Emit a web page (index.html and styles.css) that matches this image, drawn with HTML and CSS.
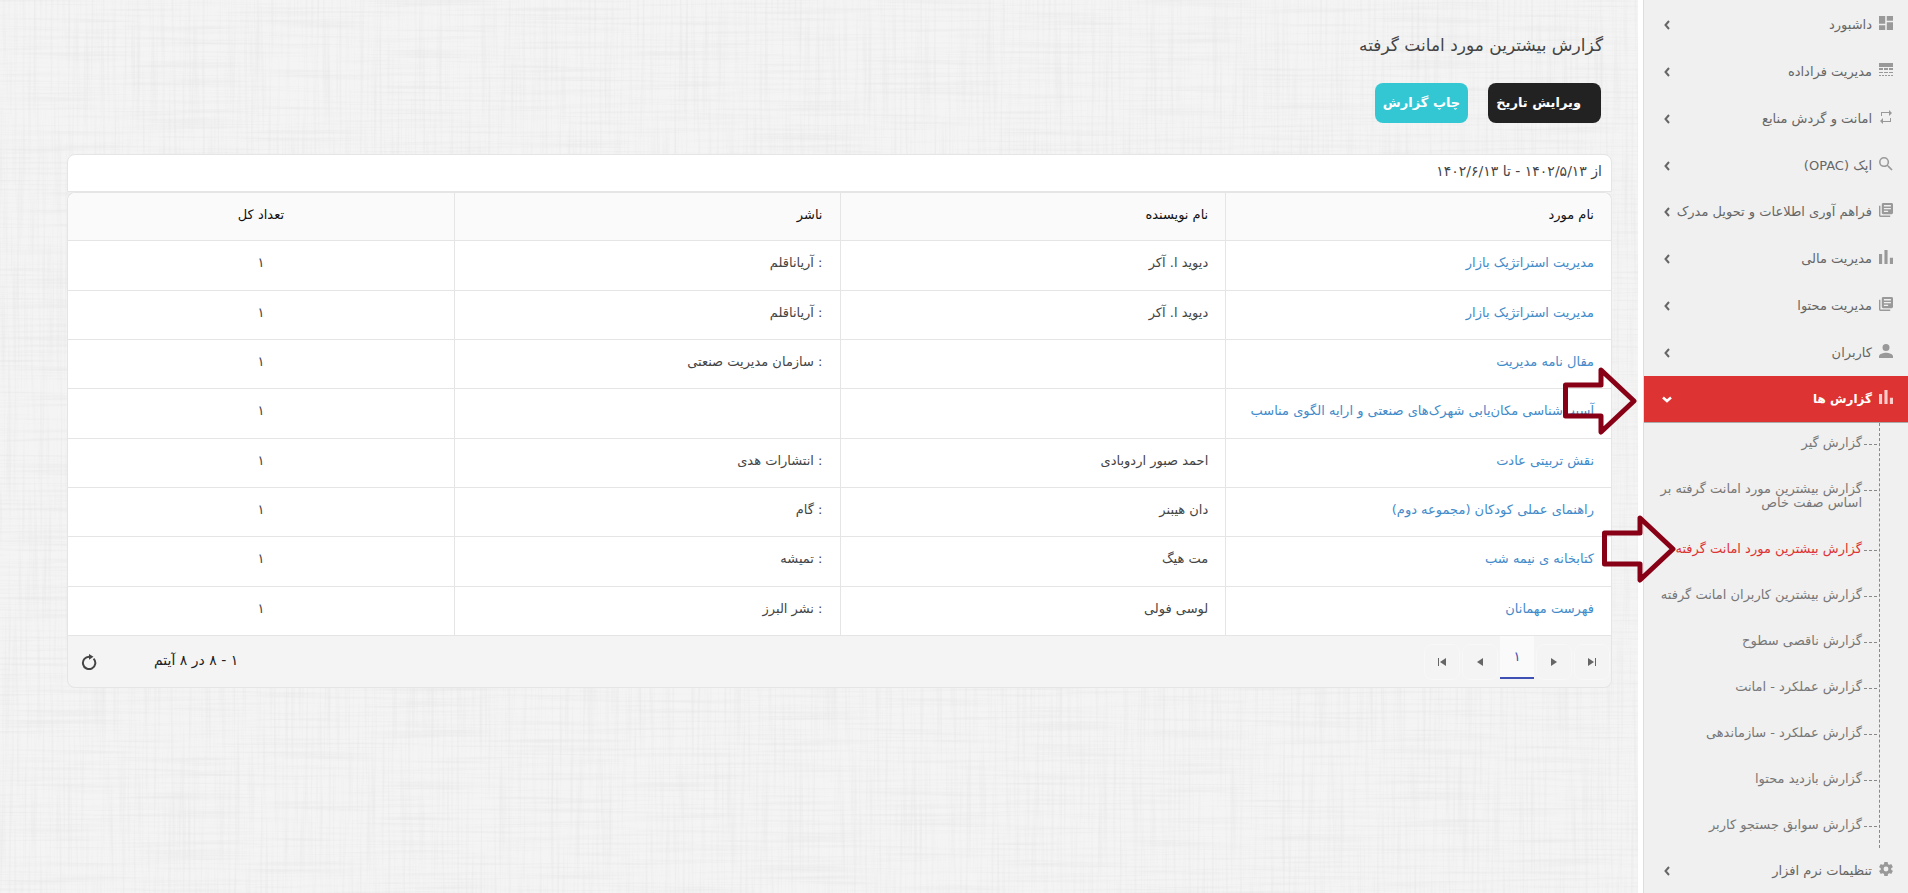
FILE: index.html
```html
<!DOCTYPE html>
<html lang="fa" dir="rtl">
<head>
  <meta charset="UTF-8" />
  <meta name="viewport" content="width=device-width, initial-scale=1.0"/>
  <title>گزارش بیشترین مورد امانت گرفته</title>
  <link rel="stylesheet" href="styles.css">
</head>
<body>

  <!-- Icons -->
  <svg class="icon-defs" aria-hidden="true">
    <symbol id="i-dashboard" viewBox="3 3 18 18"><path d="M3 13h8V3H3v10zm0 8h8v-6H3v6zm10 0h8V11h-8v10zm0-18v6h8V3h-8z"/></symbol>
    <symbol id="i-lines" viewBox="0 0 14 14"><path d="M0 0h14v4H0zM0 5h4v2H0zM5 5h4v2H5zM10 5h4v2h-4zM0 9h4v1H0zM5 9h4v1H5zM10 9h4v1h-4zM0 12h2v1H0zM3 12h2v1H3zM6 12h2v1H6zM9 12h2v1H9zM12 12h2v1h-2z"/></symbol>
    <symbol id="i-repeat" viewBox="0 0 14 14"><path d="M2 2h8V0l3 3-3 3V3H3v3H2zM12 12H4v2l-3-3 3-3v3h7V8h1z"/></symbol>
    <symbol id="i-search" viewBox="3 3 18 18"><path d="M15.500 14h-.79l-.28-.27C15.410 12.590 16 11.110 16 9.500A6.500 6.500 0 1 0 9.500 16c1.610 0 3.090-.59 4.230-1.570l.27.28v.79l5 4.990L20.490 19l-4.990-5zm-6 0a4.500 4.500 0 1 1 0-9 4.500 4.500 0 0 1 0 9z"/></symbol>
    <symbol id="i-books" viewBox="2 2 20 20"><path d="M4 6H2v14c0 1.100.9 2 2 2h14v-2H4V6zm16-4H8c-1.100 0-2 .9-2 2v12c0 1.100.9 2 2 2h12c1.100 0 2-.9 2-2V4c0-1.100-.9-2-2-2zm-1 9H9V9h10v2zm-4 4H9v-2h6v2zm4-8H9V5h10v2z"/></symbol>
    <symbol id="i-chart" viewBox="3 3 18 18"><path d="M3 8h4v13H3zM10 3h4v18h-4zM17 13h4v8h-4z"/></symbol>
    <symbol id="i-user" viewBox="4 4 16 16"><path d="M12 12a4 4 0 1 0 0-8 4 4 0 0 0 0 8zm0 2c-2.670 0-8 1.340-8 4v2h16v-2c0-2.660-5.330-4-8-4z"/></symbol>
    <symbol id="i-gear" viewBox="2 2 20 20"><path d="M19.430 12.980c.04-.32.07-.64.07-.98s-.03-.66-.07-.98l2.110-1.650c.19-.15.24-.42.12-.64l-2-3.460c-.12-.22-.39-.3-.61-.22l-2.490 1c-.52-.4-1.080-.73-1.690-.98l-.38-2.650A.49.49 0 0 0 14 2h-4c-.25 0-.46.18-.49.42l-.38 2.650c-.61.25-1.170.59-1.690.98l-2.490-1c-.23-.09-.49 0-.61.22l-2 3.460c-.13.22-.07.49.12.64l2.110 1.650c-.04.32-.07.65-.07.98s.03.66.07.98l-2.110 1.650c-.19.15-.24.42-.12.64l2 3.460c.12.22.39.3.61.22l2.490-1c.52.4 1.080.73 1.690.98l.38 2.650c.03.24.24.42.49.42h4c.25 0 .46-.18.49-.42l.38-2.650c.61-.25 1.170-.59 1.690-.98l2.490 1c.23.09.49 0 .61-.22l2-3.460c.12-.22.07-.49-.12-.64l-2.110-1.650zM12 15.500a3.500 3.500 0 1 1 0-7 3.500 3.500 0 0 1 0 7z"/></symbol>
    <symbol id="i-chevron" viewBox="0 0 6 10"><path d="M5 1 1.500 5 5 9" fill="none" stroke="currentColor" stroke-width="2"/></symbol>
    <symbol id="i-chevron-down" viewBox="0 0 10 7"><path d="M1 1.500 5 5l4-3.500" fill="none" stroke="currentColor" stroke-width="2.500"/></symbol>
    <symbol id="i-arrow" viewBox="0 0 74 68"><path d="M2.500 18H38V3l33 31-33 31V49H2.500z" fill="none" stroke="#880015" stroke-width="5" stroke-linejoin="round"/></symbol>
  </svg>

  <!-- Sidebar -->
  <nav class="sidebar">
    <ul class="menu">
      <li><a href="#"><svg class="icon"><use href="#i-dashboard"/></svg><span>داشبورد</span><svg class="chevron"><use href="#i-chevron"/></svg></a></li>
      <li><a href="#"><svg class="icon"><use href="#i-lines"/></svg><span>مدیریت فراداده</span><svg class="chevron"><use href="#i-chevron"/></svg></a></li>
      <li><a href="#"><svg class="icon"><use href="#i-repeat"/></svg><span>امانت و گردش منابع</span><svg class="chevron"><use href="#i-chevron"/></svg></a></li>
      <li><a href="#"><svg class="icon"><use href="#i-search"/></svg><span>اپک (OPAC)</span><svg class="chevron"><use href="#i-chevron"/></svg></a></li>
      <li><a href="#"><svg class="icon"><use href="#i-books"/></svg><span>فراهم آوری اطلاعات و تحویل مدرک</span><svg class="chevron"><use href="#i-chevron"/></svg></a></li>
      <li><a href="#"><svg class="icon"><use href="#i-chart"/></svg><span>مدیریت مالی</span><svg class="chevron"><use href="#i-chevron"/></svg></a></li>
      <li><a href="#"><svg class="icon"><use href="#i-books"/></svg><span>مدیریت محتوا</span><svg class="chevron"><use href="#i-chevron"/></svg></a></li>
      <li><a href="#"><svg class="icon"><use href="#i-user"/></svg><span>کاربران</span><svg class="chevron"><use href="#i-chevron"/></svg></a></li>
      <li class="open">
        <a href="#"><svg class="icon"><use href="#i-chart"/></svg><span>گزارش ها</span><svg class="chevron"><use href="#i-chevron-down"/></svg></a>
        <svg class="pointer pointer-menu"><use href="#i-arrow"/></svg>
        <ul class="submenu">
          <li><a href="#">گزارش گیر</a></li>
          <li><a href="#">گزارش بیشترین مورد امانت گرفته بر اساس صفت خاص</a></li>
          <li class="current"><a href="#">گزارش بیشترین مورد امانت گرفته</a><svg class="pointer pointer-item"><use href="#i-arrow"/></svg></li>
          <li><a href="#">گزارش بیشترین کاربران امانت گرفته</a></li>
          <li><a href="#">گزارش ناقصی سطوح</a></li>
          <li><a href="#">گزارش عملکرد - امانت</a></li>
          <li><a href="#">گزارش عملکرد - سازماندهی</a></li>
          <li><a href="#">گزارش بازدید محتوا</a></li>
          <li><a href="#">گزارش سوابق جستجو کاربر</a></li>
        </ul>
      </li>
      <li><a href="#"><svg class="icon"><use href="#i-gear"/></svg><span>تنظیمات نرم افزار</span><svg class="chevron"><use href="#i-chevron"/></svg></a></li>
    </ul>
  </nav>

  <!-- Content -->
  <main>
    <svg class="texture" aria-hidden="true">
      <filter id="weave-h" x="0" y="0" width="100%" height="100%">
        <feTurbulence type="fractalNoise" baseFrequency="0.008 0.35" numOctaves="3" seed="4"/>
        <feColorMatrix values="0 0 0 0 0.5  0 0 0 0 0.5  0 0 0 0 0.5  0.8 0 0 0 -0.36"/>
      </filter>
      <filter id="weave-v" x="0" y="0" width="100%" height="100%">
        <feTurbulence type="fractalNoise" baseFrequency="0.35 0.008" numOctaves="3" seed="9"/>
        <feColorMatrix values="0 0 0 0 0.5  0 0 0 0 0.5  0 0 0 0 0.5  0.8 0 0 0 -0.36"/>
      </filter>
      <rect width="100%" height="100%" filter="url(#weave-h)"/>
      <rect width="100%" height="100%" filter="url(#weave-v)"/>
    </svg>

    <h1>گزارش بیشترین مورد امانت گرفته</h1>

    <div class="actions">
      <button class="btn btn-dark" type="button">ویرایش تاریخ</button>
      <button class="btn btn-info" type="button">چاپ گزارش</button>
    </div>

    <section class="report">
      <div class="range">از ۱۴۰۲/۵/۱۳ - تا ۱۴۰۲/۶/۱۳</div>
      <table>
        <thead>
          <tr><th>نام مورد</th><th>نام نویسنده</th><th>ناشر</th><th>تعداد کل</th></tr>
        </thead>
        <tbody>
          <tr><td><a href="#">مدیریت استراتژیک بازار</a></td><td>دیوید ا. آکر</td><td>: آریاناقلم</td><td>۱</td></tr>
          <tr><td><a href="#">مدیریت استراتژیک بازار</a></td><td>دیوید ا. آکر</td><td>: آریاناقلم</td><td>۱</td></tr>
          <tr><td><a href="#">مقال نامه مدیریت</a></td><td></td><td>: سازمان مدیریت صنعتی</td><td>۱</td></tr>
          <tr><td><a href="#">آسیب‌شناسی مکان‌یابی شهرک‌های صنعتی و ارایه الگوی مناسب</a></td><td></td><td></td><td>۱</td></tr>
          <tr><td><a href="#">نقش تربیتی عادت</a></td><td>احمد صبور اردوبادی</td><td>: انتشارات هدی</td><td>۱</td></tr>
          <tr><td><a href="#">راهنمای عملی کودکان (مجموعه دوم)</a></td><td>دان هیبنر</td><td>: گام</td><td>۱</td></tr>
          <tr><td><a href="#">کتابخانه ی نیمه شب</a></td><td>مت هیگ</td><td>: تمیشه</td><td>۱</td></tr>
          <tr><td><a href="#">فهرست مهمانان</a></td><td>لوسی فولی</td><td>: نشر البرز</td><td>۱</td></tr>
        </tbody>
      </table>
      <div class="pager">
        <button type="button" aria-label="صفحه اول"><svg viewBox="0 0 8 8"><path d="M0 0l6 4-6 4zM7 0h1v8H7z"/></svg></button>
        <button type="button" aria-label="صفحه قبل"><svg viewBox="0 0 8 8"><path d="M1 0l6 4-6 4z"/></svg></button>
        <button type="button" class="page">۱</button>
        <button type="button" aria-label="صفحه بعد"><svg viewBox="0 0 8 8"><path d="M7 0L1 4l6 4z"/></svg></button>
        <button type="button" aria-label="صفحه آخر"><svg viewBox="0 0 8 8"><path d="M8 0L2 4l6 4zM0 0h1v8H0z"/></svg></button>
        <span class="info">۱ - ۸ در ۸ آیتم</span>
        <button type="button" class="refresh" aria-label="بارگذاری مجدد"><svg viewBox="0 0 16 16"><path d="M12.600 4.600A6.200 6.200 0 1 1 8.500 2.700" fill="none" stroke="#444" stroke-width="2"/><path d="M8 0l4.500 2.700L8 5.800z" fill="#444"/></svg></button>
      </div>
    </section>
  </main>

</body>
</html>
```
FILE: styles.css
```css
* {
  box-sizing: border-box;
}

body {
  margin: 0;
  height: 100vh;
  display: flex;
  overflow: hidden;
  background: #fff;
  color: #444;
  font-family: "DejaVu Sans", sans-serif;
  font-size: 13px;
  line-height: 20px;
}

a {
  text-decoration: none;
}

ul {
  list-style: none;
  margin: 0;
  padding: 0;
}

.icon-defs {
  position: absolute;
  width: 0;
  height: 0;
}

/* Sidebar */
.sidebar {
  flex: 0 0 265px;
  background: #f0f0f0;
  border-left: 1px solid #ddd;
}

.menu {
  padding-top: 2px;
}

.menu > li {
  position: relative;
}

.menu > li > a {
  display: flex;
  align-items: center;
  height: 47px;
  padding: 0 15px 0 20px;
  color: #666;
  border-bottom: 1px solid transparent;
}

.menu > li:nth-child(4n) > a {
  height: 46px;
}

.menu > li > a span {
  flex: 1;
  margin-right: 7px;
  white-space: nowrap;
}

.icon {
  width: 14px;
  height: 14px;
  margin-bottom: 4px;
  fill: #999;
}

.chevron {
  width: 6px;
  height: 10px;
}

.menu > .open > a {
  background: #dd3333;
  background-clip: padding-box;
  border-bottom-color: #aaa;
  color: #fff;
  font-size: 12px;
  font-weight: bold;
  padding-left: 18px;
}

.open .icon {
  fill: #fcc;
}

.open .chevron {
  width: 10px;
  height: 7px;
}

.submenu {
  margin-right: 28px;
  border-right: 1px dashed #888;
}

.submenu li {
  position: relative;
  padding: 16px 17px 16px 12px;
  line-height: 14px;
}

.submenu li:first-child {
  padding-top: 13px;
}

.submenu li::before {
  content: "";
  position: absolute;
  right: 2px;
  width: 13px;
  margin-top: 8px;
  border-top: 1px dashed #888;
}

.submenu a {
  color: #777;
}

.submenu .current a {
  color: #dd3333;
}

.pointer {
  position: absolute;
  width: 74px;
  height: 68px;
  z-index: 2;
  pointer-events: none;
}

.pointer-menu {
  top: -9px;
  right: 271px;
}

.pointer-item {
  top: -11px;
  right: 203px;
}

/* Content */
main {
  position: relative;
  flex: 1;
  margin-right: 5px;
  padding: 30px 26px 0 67px;
  background: #f4f4f4;
}

.texture {
  position: absolute;
  top: 0;
  left: 0;
  width: 100%;
  height: 100%;
  opacity: 0.4;
}

h1,
.actions,
.report {
  position: relative;
}

h1 {
  margin: 0 9px 23px;
  font-size: 17px;
  font-weight: normal;
  line-height: 30px;
}

.actions {
  display: flex;
  gap: 20px;
  margin: 0 11px 31px;
}

.btn {
  height: 40px;
  padding: 0 8px 2px;
  border: 0;
  border-radius: 8px;
  color: #fff;
  font-family: inherit;
  font-size: 13px;
  font-weight: bold;
}

.btn-dark {
  background: #222;
  padding-right: 20px;
}

.btn-info {
  background: #33c7d4;
}

.range {
  height: 38px;
  padding: 6px 9px;
  background: #fff;
  border: 1px solid #e5e5e5;
  border-radius: 8px 8px 0 0;
  font-size: 14px;
}

table {
  width: 100%;
  table-layout: fixed;
  border-collapse: separate;
  border-spacing: 0;
  border: 1px solid #e5e5e5;
  border-bottom: 0;
  border-radius: 8px 8px 0 0;
  background: #fff;
}

th,
td {
  height: 49px;
  padding: 0 17px 5px;
  text-align: right;
  border-bottom: 1px solid #e5e5e5;
  border-left: 1px solid #e5e5e5;
}

th {
  height: 48px;
  padding-bottom: 3px;
  background: #fafafa;
  color: #111;
  font-weight: normal;
}

th:first-child {
  border-radius: 0 8px 0 0;
}

th:last-child {
  border-radius: 8px 0 0 0;
}

tbody tr:nth-child(3n + 1) td {
  height: 50px;
}

th:last-child,
td:last-child {
  border-left: 0;
  text-align: center;
}

td a {
  color: #428bca;
}

.pager {
  display: flex;
  align-items: center;
  gap: 2px;
  height: 52px;
  padding: 0 1px 0 12px;
  background: #f4f4f4;
  border: 1px solid #e5e5e5;
  border-top: 0;
  border-radius: 0 0 8px 8px;
}

.pager button {
  display: flex;
  align-items: center;
  justify-content: center;
  width: 36px;
  height: 36px;
  padding: 0;
  background: transparent;
  border: 1px solid #f8f8f8;
  border-radius: 8px;
  font-family: inherit;
}

.pager button svg {
  width: 8px;
  height: 8px;
  fill: #666;
}

.pager .page {
  align-self: flex-start;
  width: 34px;
  height: 43px;
  background: #fafafa;
  border: 0;
  border-bottom: 2px solid #3f51b5;
  border-radius: 0;
  color: #3f51b5;
}

.info {
  margin-right: auto;
  margin-left: 54px;
  padding-bottom: 4px;
  color: #222;
  font-size: 14px;
}

.pager .refresh {
  width: 18px;
  border: 0;
}

.pager .refresh svg {
  width: 16px;
  height: 16px;
}
```
